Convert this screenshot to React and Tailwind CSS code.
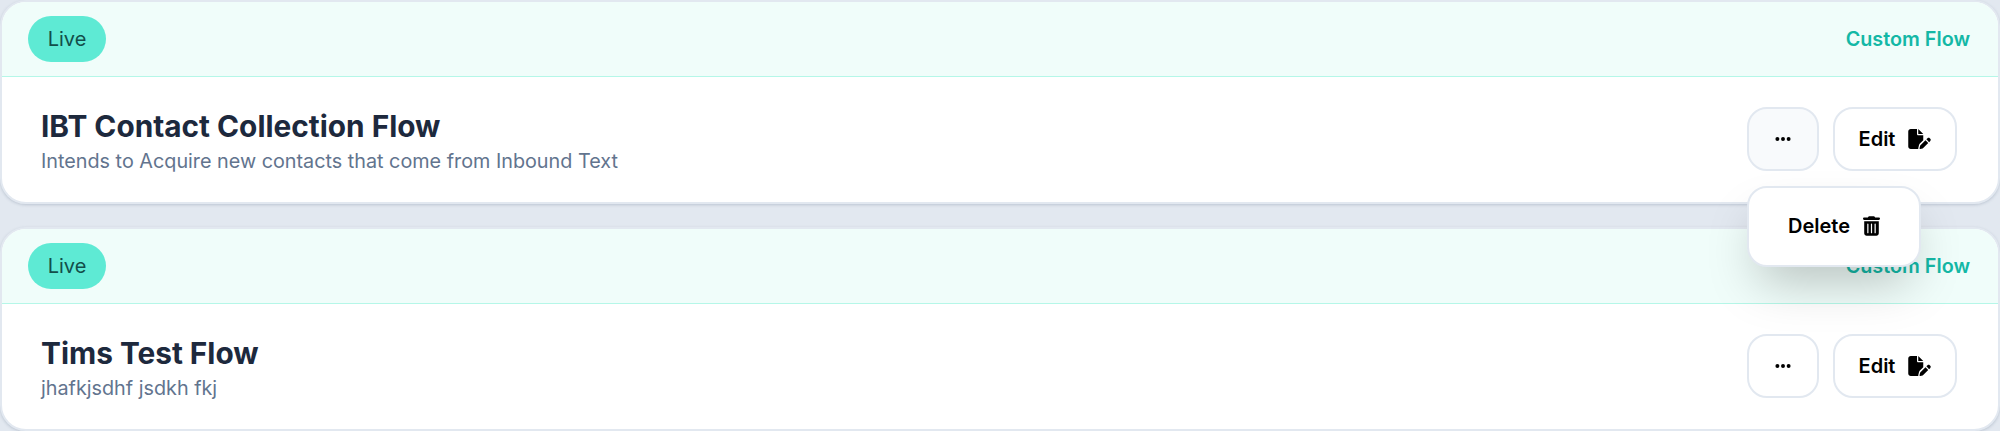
import React from 'react';
import { FaEllipsis, FaFilePen, FaTrashCan } from 'react-icons/fa6';

const flows = [
    { title: 'IBT Contact Collection Flow', description: 'Intends to Acquire new contacts that come from Inbound Text', menuOpen: true },
    { title: 'Tims Test Flow', description: 'jhafkjsdhf jsdkh fkj', menuOpen: false },
];

function FlowCard({ flow }) {
    return (
        <div className={`relative h-[204px] rounded-[26px] bg-white border-2 border-slate-200 shadow-[0_1px_3px_rgba(100,116,139,0.3)] ${flow.menuOpen ? 'z-10' : ''}`}>
            {/* Status header */}
            <div className="h-[75px] rounded-t-[24px] bg-[#f0fdfa] border-b border-[#b5f7e8] pl-[26px] pr-[28px] flex items-center justify-between">
                <span className="h-[46px] w-[78px] rounded-[23px] bg-[#5eead4] text-[#134e4a] text-xl flex items-center justify-center">Live</span>
                <span className="pt-px text-[19.8px] font-semibold text-[#14b8a6]">Custom Flow</span>
            </div>

            <div className="h-[125px] pl-[39px] pr-[41px] flex items-center justify-between">
                <div>
                    <h2 className="pt-[2px] text-[29.8px] leading-[41px] font-bold text-slate-800">{flow.title}</h2>
                    <p className="text-[19.8px] leading-7 text-slate-500">{flow.description}</p>
                </div>

                <div className="relative mb-[2px] flex gap-[14px]">
                    <button className={`h-[64px] w-[72px] rounded-[20px] border-2 border-slate-200 flex items-center justify-center text-black ${flow.menuOpen ? 'bg-slate-50' : 'bg-white'}`}>
                        <FaEllipsis className="w-[18px] h-[18px]" />
                    </button>
                    <button className="h-[64px] w-[124px] rounded-[20px] border-2 border-slate-200 bg-white flex items-center justify-center gap-[13px] text-xl font-semibold text-black">
                        Edit
                        <FaFilePen className="w-[23px] h-[20px]" />
                    </button>

                    {flow.menuOpen && (
                        <div className="absolute left-0 top-[79px] h-[81px] w-[174px] rounded-[20px] border-2 border-slate-200 bg-white shadow-[0_25px_50px_-12px_rgba(0,0,0,0.25)] flex items-center justify-center gap-[13px] text-xl font-semibold text-black">
                            Delete
                            <FaTrashCan className="w-[17px] h-[20px]" />
                        </div>
                    )}
                </div>
            </div>
        </div>
    );
}

export default function App() {
    return (
        <div className="h-[431px] overflow-hidden bg-slate-200 flex flex-col gap-[23px] font-['Inter',sans-serif]">
            {flows.map((flow) => (
                <FlowCard key={flow.title} flow={flow} />
            ))}
        </div>
    );
}
